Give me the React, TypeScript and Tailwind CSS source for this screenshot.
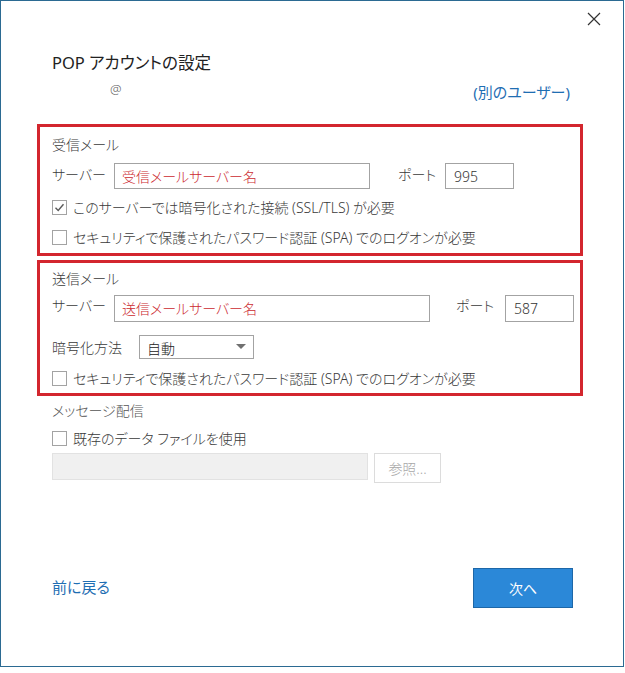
import React from "react";

const font = { fontFamily: '"Noto Sans", "Noto Sans CJK JP", sans-serif' };

function Checkbox({ checked }: { checked?: boolean }) {
  return (
    <span className="w-[15px] h-[15px] border border-[#a3a3a3] bg-white flex items-center justify-center shrink-0">
      {checked && (
        <svg width="11" height="11" viewBox="0 0 11 11">
          <path d="M1.5 5.8 L4.2 8.5 L9.5 2.2" fill="none" stroke="#5a5a5a" strokeWidth="1.4" />
        </svg>
      )}
    </span>
  );
}

function CheckRow({ checked, label, className }: { checked?: boolean; label: string; className?: string }) {
  return (
    <div className={"flex items-center h-[20px] gap-[6px] text-[14px] text-[#3a3a3a] " + (className ?? "")}>
      <Checkbox checked={checked} />
      <span className="[font-feature-settings:'palt'] font-light">{label}</span>
    </div>
  );
}

export default function App() {
  return (
    <div className="w-[625px] h-[673px] bg-white" style={font}>
      <div className="w-[624px] h-[667px] border border-[#2b6a92] flex flex-col">
        <div className="flex justify-end pr-[22px] pt-[11px] h-[28px]">
          <svg width="14" height="14" viewBox="0 0 14 14">
            <path d="M1 1 L13 13 M13 1 L1 13" stroke="#333" strokeWidth="1.2" />
          </svg>
        </div>
        <div className="pl-[51px] mt-[22px] text-[16.5px] leading-[24px] text-[#222] [font-feature-settings:'palt']">
          POP アカウントの設定
        </div>
        <div className="flex items-center justify-between pl-[109px] pr-[53px] mt-[3px] h-[24px]">
          <span className="text-[13px] text-[#666] font-light">@</span>
          <span className="text-[15px] text-[#1f6eb3] mt-[4px] [font-feature-settings:'palt']">(別のユーザー)</span>
        </div>

        <div className="ml-[36px] mr-[40px] mt-[22px] border-[3px] border-[#d3262e] pl-[12px] pt-[8px] h-[132px] flex flex-col text-[#3a3a3a] [font-feature-settings:'palt'] font-light">
          <div className="text-[14px] leading-[20px]">受信メール</div>
          <div className="flex items-center mt-[8px] h-[26px]">
            <span className="w-[62px] text-[14px] -mt-[3px]">サーバー</span>
            <div className="w-[256px] h-[26px] border border-[#a3a3a3] flex items-center pl-[7px] text-[14px] text-[#cc2a2f]">受信メールサーバー名</div>
            <span className="ml-[28px] w-[47px] text-[14px] -mt-[3px]">ポート</span>
            <div className="w-[69px] h-[26px] border border-[#a3a3a3] flex items-center pl-[8px] text-[14px] text-[#333]">995</div>
          </div>
          <CheckRow checked label="このサーバーでは暗号化された接続 (SSL/TLS) が必要" className="mt-[8px]" />
          <CheckRow label="セキュリティで保護されたパスワード認証 (SPA) でのログオンが必要" className="mt-[10px]" />
        </div>

        <div className="ml-[36px] mr-[40px] mt-[4px] border-[3px] border-[#d3262e] pl-[12px] pt-[6px] h-[136px] flex flex-col text-[#3a3a3a] [font-feature-settings:'palt'] font-light">
          <div className="text-[14px] leading-[20px]">送信メール</div>
          <div className="flex items-center mt-[6px] h-[27px]">
            <span className="w-[62px] text-[14px] -mt-[6px]">サーバー</span>
            <div className="w-[316px] h-[27px] border border-[#a3a3a3] flex items-center pl-[7px] text-[14px] text-[#cc2a2f]">送信メールサーバー名</div>
            <span className="ml-[26px] w-[49px] text-[14px] -mt-[6px]">ポート</span>
            <div className="w-[69px] h-[27px] border border-[#a3a3a3] flex items-center pl-[8px] text-[14px] text-[#333]">587</div>
          </div>
          <div className="flex items-center mt-[13px] h-[24px]">
            <span className="w-[87px] text-[14px]">暗号化方法</span>
            <div className="w-[115px] h-[24px] border border-[#a3a3a3] flex items-center justify-between pl-[7px] pr-[7px] text-[14px] text-[#222]">
              <span className="mt-[3px]">自動</span>
              <svg width="10" height="6" viewBox="0 0 10 6"><path d="M0 0 L10 0 L5 5 Z" fill="#707070" /></svg>
            </div>
          </div>
          <CheckRow label="セキュリティで保護されたパスワード認証 (SPA) でのログオンが必要" className="mt-[9px]" />
        </div>

        <div className="pl-[51px] mt-[5px] flex flex-col text-[#3a3a3a] [font-feature-settings:'palt'] font-light">
          <div className="text-[14px] leading-[20px] text-[#555]">メッセージ配信</div>
          <CheckRow label="既存のデータ ファイルを使用" className="mt-[7px]" />
          <div className="flex mt-[5px]">
            <div className="w-[316px] h-[27px] bg-[#f0f0f0] border border-[#e2e2e2]" />
            <div className="ml-[6px] w-[67px] h-[30px] border border-[#dcdcdc] flex items-center justify-center text-[14px] text-[#a8a8a8]">参照...</div>
          </div>
        </div>

        <div className="flex items-center justify-between pl-[51px] pr-[50px] mt-[85px]">
          <span className="text-[15px] text-[#1f6eb3] -mt-[2px] [font-feature-settings:'palt']">前に戻る</span>
          <div className="w-[100px] h-[40px] bg-[#2b88d8] border border-[#1d67a8] flex items-center justify-center text-[14px] text-white">次へ</div>
        </div>
      </div>
    </div>
  );
}
